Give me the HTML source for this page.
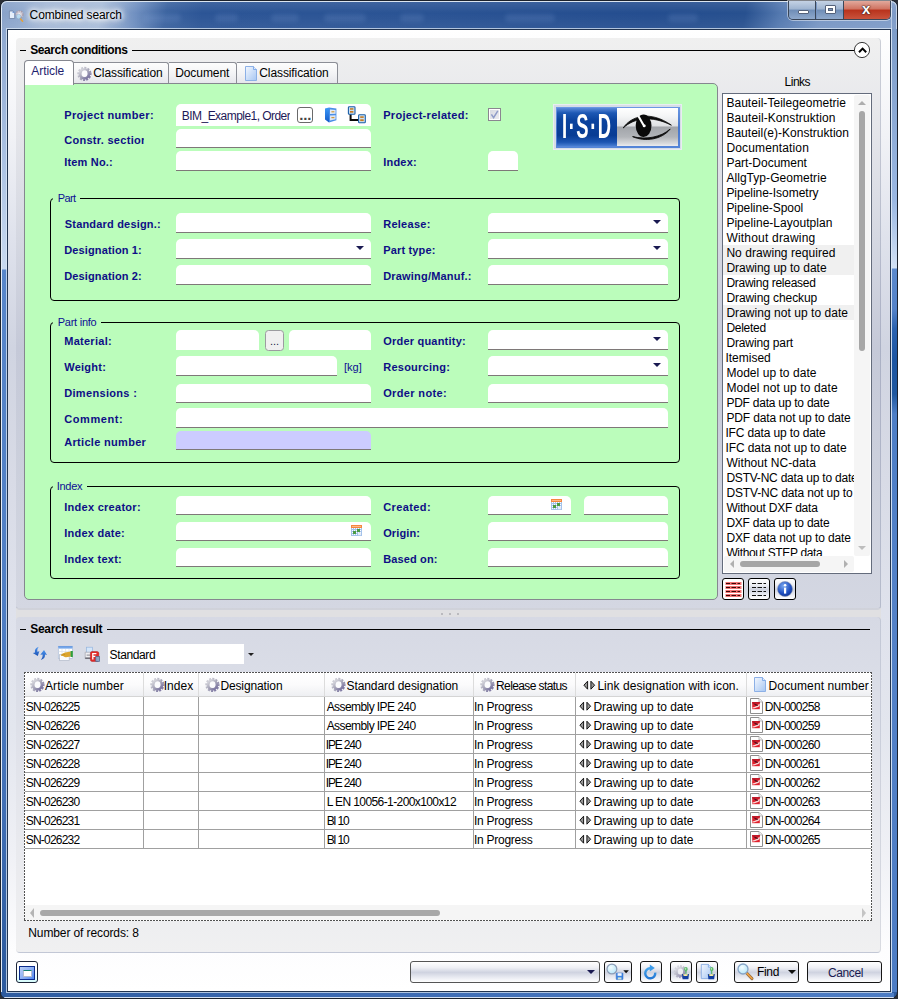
<!DOCTYPE html><html><head><meta charset="utf-8"><title>Combined search</title><style>
*{box-sizing:border-box;margin:0;padding:0}
html,body{width:898px;height:999px;overflow:hidden}
body{position:relative;font-family:"Liberation Sans",sans-serif;font-size:12px;color:#000;background:#2a2e36}
.a{position:absolute}
.t{position:absolute;white-space:nowrap;line-height:14px;height:14px}
.lb{position:absolute;white-space:nowrap;font-weight:700;font-size:11px;line-height:13px;height:13px;color:#0e0e86}
.gt{position:absolute;white-space:nowrap;font-size:11px;line-height:13px;height:13px;color:#0e0e94}
.f{position:absolute;background:#fff;border-radius:5px 5px 0 0;border-bottom:1px solid #7e7878}
.f.nb{border-bottom:0}
.grp{position:absolute;border:1px solid #000;border-radius:4px}
.cut{position:absolute;background:#bbfdbb;height:3px}
.dd{position:absolute;width:0;height:0;border-left:4px solid transparent;border-right:4px solid transparent;border-top:4px solid #1a1a52}
.btn{position:absolute;border:1px solid #161616;border-radius:3px;background:linear-gradient(#ffffff 0%,#eff0f5 28%,#cfd3e0 52%,#e6e8f0 74%,#ffffff 100%)}
.row{position:absolute;left:25px;width:846px;height:1px;background:#a0a0a0}
.col{position:absolute;width:1px;background:#a0a0a0;top:696px;height:152px}
.hc{position:absolute;width:1px;top:673px;height:23px;background:#dcdcdc}
.li{position:absolute;left:726px;white-space:nowrap;line-height:15px;height:15px;color:#000}
</style></head><body>
<div class="a" id="frame" style="left:0;top:0;width:898px;height:999px;border-radius:7px 7px 7px 6px;background:linear-gradient(180deg,#8ea7cd 0px,#8ea8d0 30px,#a9c0e2 150px,#c8d9f0 268px,#5886ca 269px,#4f7ec4 600px,#4270b6 800px,#2e5ca0 960px,#2c5a9e 999px);border:1px solid #1c222c"></div>
<div class="a" id="title" style="left:1px;top:1px;width:896px;height:28px;border-radius:6px 6px 0 0;background:linear-gradient(180deg,rgba(255,255,255,.10) 0,rgba(255,255,255,0) 12px,rgba(255,255,255,.06) 28px),linear-gradient(100deg,#87a0c8 0px,#8fa8cd 20px,#a4b8d6 45px,#a9bdd9 100px,#6f8fc0 135px,#3a629f 165px,#2c5596 200px,#2a5394 420px,#244d8f 640px,#27508f 735px,#5479b0 770px,#7896c4 810px,#7f9cc8 896px);box-shadow:inset 0 1px 0 #dbe5f0, inset 1px 0 0 #d5e0ee, inset -1px 0 0 #c5d3e6"></div>
<div class="a" style="left:143px;top:14px;width:38px;height:8px;border-radius:4px;background:rgba(140,175,225,.16);filter:blur(2px)"></div>
<div class="a" style="left:215px;top:14px;width:23px;height:8px;border-radius:4px;background:rgba(140,175,225,.16);filter:blur(2px)"></div>
<div class="a" style="left:271px;top:14px;width:28px;height:8px;border-radius:4px;background:rgba(140,175,225,.16);filter:blur(2px)"></div>
<div class="a" style="left:324px;top:14px;width:42px;height:8px;border-radius:4px;background:rgba(140,175,225,.16);filter:blur(2px)"></div>
<div class="a" style="left:400px;top:14px;width:24px;height:8px;border-radius:4px;background:rgba(140,175,225,.16);filter:blur(2px)"></div>
<div class="a" style="left:505px;top:14px;width:50px;height:8px;border-radius:4px;background:rgba(140,175,225,.16);filter:blur(2px)"></div>
<div class="a" style="left:668px;top:14px;width:30px;height:8px;border-radius:4px;background:rgba(140,175,225,.16);filter:blur(2px)"></div>
<div class="a" style="left:891px;top:29px;width:6px;height:963px;background:linear-gradient(180deg,#7d9cc8 0,#9ab7e2 170px,#d2e1f4 239px,#5b89cc 240px,#5482c8 280px,#2a62b0 300px,#1c55a2 330px,#20589f 365px,#4d7ec6 385px,#5482c8 600px,#4c7cc4 963px)"></div>
<div class="a" style="left:891px;top:8px;width:1px;height:984px;background:rgba(230,240,252,.55)"></div>
<div class="a" style="left:1px;top:8px;width:1px;height:984px;background:#e4ecf6"></div>
<div class="a" style="left:6px;top:993px;width:888px;height:4px;background:linear-gradient(90deg,#2e5ca0 0,#3a68b0 300px,#4878c0 700px,#4c7cc4 100%)"></div>
<div class="a" style="left:4px;top:997px;width:890px;height:1px;background:#d4e0f2;border-radius:0 0 3px 3px"></div>
<div class="a" id="client" style="left:8px;top:30px;width:882px;height:961px;background:linear-gradient(180deg,#ffffff 0px,#f1f2f6 105px,#dfe2ec 208px,#d0d4e1 318px,#d8dbe6 450px,#dfe2ec 580px,#e3e6ee 700px,#eff0f5 820px,#fdfdfe 920px,#ffffff 961px);box-shadow:0 0 0 1px #22344f,0 0 0 2px rgba(220,232,246,.75)"></div>
<svg class="a" style="left:8px;top:9px" width="17" height="15" viewBox="8 9 17 15"><path d="M9.4 11 H13 L14.7 12.6 V18.5 H9.4Z" fill="#e6effb" stroke="#6c80a4" stroke-width=".8"/><path d="M12.6 11.2 L14.5 13 H12.6Z" fill="#5f8fd8"/><circle cx="19.4" cy="14.4" r="3.6" fill="#d2ccd6" stroke="#a49cac" stroke-width="1.4" stroke-dasharray="1.6 1"/><circle cx="19.2" cy="14.6" r="1.5" fill="#f0f0f4"/><circle cx="18.6" cy="16.6" r="2.3" fill="#b4dcf4" fill-opacity=".9" stroke="#90a8c0" stroke-width=".5"/><path d="M20.6 19 L22.6 21.2" stroke="#e8a030" stroke-width="1.4" stroke-linecap="round"/></svg>
<div class="t" style="left:29.60px;top:8px;letter-spacing:-0.120px;color:#000;text-shadow:0 0 7px #fff,0 0 7px #fff,0 0 4px #fff,0 0 10px #fff">Combined search</div>
<div class="a" style="left:788px;top:1px;width:103px;height:19px;border:1px solid #3a4658;border-top:0;border-radius:0 0 5px 5px;overflow:hidden;box-shadow:0 0 0 1px rgba(255,255,255,.45)"><div class="a" style="left:0;top:0;width:27px;height:18px;background:linear-gradient(#c4d2e4 0,#9fb4d0 45%,#6f8db6 50%,#8fa9cc 100%);border-right:1px solid #3a4658"></div><div class="a" style="left:28px;top:0;width:27px;height:18px;background:linear-gradient(#c4d2e4 0,#9fb4d0 45%,#6f8db6 50%,#8fa9cc 100%);border-right:1px solid #3a4658"></div><div class="a" style="left:55px;top:0;width:46px;height:18px;background:linear-gradient(#e2a99c 0,#cf7260 45%,#b8321c 50%,#c9533c 100%)"></div><div class="a" style="left:9px;top:9px;width:11px;height:4px;background:#fff;border:1px solid #55627a;border-radius:1px"></div><div class="a" style="left:36px;top:4px;width:11px;height:9px;background:#fff;border:1px solid #55627a;border-radius:1px"></div><div class="a" style="left:39px;top:7px;width:5px;height:3px;background:#7f96b8;border:1px solid #55627a"></div><div class="t" style="left:73px;top:1px;font-weight:700;font-size:15px;line-height:14px;color:#fff;text-shadow:0 0 1px #3a2020,0 0 1px #3a2020,0 0 2px #3a2020">x</div></div>
<div class="a" style="left:16px;top:600px;width:865px;height:24px;background:#e0e0e2"></div>
<div class="a" id="p1" style="left:16px;top:38px;width:865px;height:572px;border-radius:4px;background:linear-gradient(180deg,#f0f0f0 0px,#e4e5ea 97px,#d5d8e2 200px,#c5c9d8 310px,#cdd1dd 450px,#d4d7e2 572px);border-right:1px solid rgba(80,90,130,.22);border-bottom:2px solid rgba(80,90,130,.2)"></div>
<div class="a" style="left:20px;top:50px;width:6px;height:1px;background:#000"></div>
<div class="t" style="left:30.20px;top:43px;letter-spacing:-0.397px;font-weight:700;">Search conditions</div>
<div class="a" style="left:132px;top:50px;width:722px;height:1px;background:#000"></div>
<svg class="a" style="left:853px;top:41px" width="18" height="18" viewBox="0 0 18 18"><circle cx="9" cy="9" r="7.6" fill="#fff" stroke="#222" stroke-width="0.9"/><path d="M6.0 11.2 L9.6 7.6 L13.2 11.2" fill="none" stroke="#000" stroke-width="2"/></svg>
<div class="a" style="left:73px;top:62px;width:96px;height:21px;background:linear-gradient(#fdfdfd 0,#f4f4f6 50%,#e6e7ec 100%);border:1px solid #8c8e96;border-left:0;border-bottom:0;border-radius:0 3px 0 0"></div>
<div class="a" style="left:169px;top:62px;width:68px;height:21px;background:linear-gradient(#fdfdfd 0,#f4f4f6 50%,#e6e7ec 100%);border:1px solid #8c8e96;border-left:0;border-bottom:0;border-radius:0 3px 0 0"></div>
<div class="a" style="left:237px;top:62px;width:101px;height:21px;background:linear-gradient(#fdfdfd 0,#f4f4f6 50%,#e6e7ec 100%);border:1px solid #8c8e96;border-left:0;border-bottom:0;border-radius:0 3px 0 0"></div>
<div class="a" id="green" style="left:24px;top:83px;width:694px;height:517px;background:#bbfdbb;border:1px solid #85878f;border-radius:0 5px 5px 5px"></div>
<div class="a" style="left:24px;top:60px;width:50px;height:25px;background:#fff;border:1px solid #85878f;border-bottom:0;border-radius:4px 4px 0 0"></div>
<div class="t" style="left:31.30px;top:64px;letter-spacing:-0.078px;color:#1e1e6e">Article</div>
<svg class="a" style="left:77px;top:66px" width="15" height="16" viewBox="0 0 15 16"><defs><linearGradient id="gg" x1="0.15" y1="0.1" x2="0.85" y2="0.95"><stop offset="0" stop-color="#d0d0d8"/><stop offset="0.45" stop-color="#aaa9bb"/><stop offset="1" stop-color="#7d77a2"/></linearGradient></defs><g transform="translate(7.4 7.9)"><circle r="6.2" fill="none" stroke="url(#gg)" stroke-width="1.9" stroke-dasharray="2.0 1.246" transform="rotate(-8)"/><circle r="4.35" fill="none" stroke="url(#gg)" stroke-width="2.9"/><ellipse cx="0.3" cy="-0.3" rx="2.7" ry="3.3" fill="#fbfbfd"/></g></svg>
<div class="t" style="left:93.30px;top:66px;letter-spacing:-0.102px;">Classification</div>
<div class="t" style="left:175.20px;top:66px;letter-spacing:-0.080px;">Document</div>
<svg class="a" style="left:245px;top:66px" width="12" height="15" viewBox="0 0 12 15"><defs><linearGradient id="dg0" x1="0" y1="0" x2="1" y2="1"><stop offset="0" stop-color="#f4f8ff"/><stop offset="1" stop-color="#a6c6f2"/></linearGradient></defs><path d="M0.5 0.5 H8.5 L11.5 3.5 V14.5 H0.5Z" fill="url(#dg0)" stroke="#8cb0e6" stroke-width="1"/><path d="M8.5 0.5 V3.5 H11.5" fill="#dfeafc" stroke="#6f9ee4" stroke-width="0.8"/></svg>
<div class="t" style="left:259.30px;top:66px;letter-spacing:-0.102px;">Classification</div>
<div class="lb" style="left:64.20px;top:109px;letter-spacing:0.358px;">Project number:</div>
<div class="f nb" style="left:176px;top:104px;width:195px;height:22px;"></div>
<div class="t" style="left:181.80px;top:109px;letter-spacing:-0.544px;color:#1e1a58;width:107.9px;overflow:hidden">BIM_Example1, Order</div>
<div class="a" style="left:297px;top:107px;width:16px;height:16px;border:1px solid #6a6a6a;border-radius:3px;background:#fff"></div>
<div class="t" style="left:299.2px;top:108px;font-size:15px;font-weight:700;letter-spacing:-0.17px;color:#444">...</div>
<svg class="a" style="left:324px;top:106px" width="14" height="18" viewBox="324 106 14 18"><defs><linearGradient id="cb1" x1="0" y1="0" x2="0" y2="1"><stop offset="0" stop-color="#3c9af8"/><stop offset="1" stop-color="#1258c8"/></linearGradient></defs><path d="M325 108.6 L329 107.4 V122.6 L325 119.6Z" fill="url(#cb1)"/><path d="M329 107.4 L336.4 108.4 V120.2 L329 122.6Z" fill="#4a8ee6"/><path d="M330 109.4 L335.6 110 V113.8 L330 114Z" fill="#e2ebf8"/><path d="M330 115.4 L335.6 115.2 V119.2 L330 120.4Z" fill="#dce6f6"/><rect x="331.4" y="111.2" width="3" height="1.2" fill="#d09a3a"/><rect x="331.4" y="117" width="3" height="1.2" fill="#d09a3a"/></svg>
<svg class="a" style="left:347px;top:105px" width="20" height="19" viewBox="347 105 20 19"><path d="M350.6 114 V120 H358.5" fill="none" stroke="#0a0a0a" stroke-width="2"/><rect x="348.4" y="106.7" width="6.6" height="7.6" rx=".8" fill="#cfe0f0" stroke="#1a5fa8" stroke-width="1.1"/><rect x="350" y="108.2" width="3.4" height="1.5" fill="#c47a22"/><rect x="350" y="111" width="3.4" height="1.7" fill="#c47a22"/><rect x="358.6" y="114.7" width="6.7" height="8" rx=".8" fill="#cfe0f0" stroke="#1a5fa8" stroke-width="1.1"/><rect x="360.2" y="116.3" width="3.5" height="1.6" fill="#c47a22"/><rect x="360.2" y="119.3" width="3.5" height="1.8" fill="#c47a22"/></svg>
<div class="lb" style="left:383.20px;top:109px;letter-spacing:0.305px;">Project-related:</div>
<div class="a" style="left:488px;top:108px;width:13px;height:13px;border:1px solid #8a8690;background:#fff"><div class="a" style="left:1px;top:1px;width:9px;height:9px;background:linear-gradient(135deg,#d8dbe2,#ececf0)"></div><svg class="a" style="left:0px;top:0px" width="11" height="11" viewBox="0 0 11 11"><path d="M2.4 5.4 L4.6 8.6 L8.8 1.8" fill="none" stroke="#8f9cc8" stroke-width="1.5"/></svg></div>
<div class="lb" style="left:64.20px;top:134px;letter-spacing:0.291px;width:80.3px;overflow:hidden">Constr. section</div>
<div class="f " style="left:176px;top:129px;width:195px;height:19px;"></div>
<div class="lb" style="left:64.20px;top:156px;letter-spacing:0.188px;">Item No.:</div>
<div class="f " style="left:176px;top:151px;width:195px;height:20px;"></div>
<div class="lb" style="left:383.20px;top:156px;letter-spacing:0.214px;">Index:</div>
<div class="f " style="left:488px;top:151px;width:30px;height:20px;"></div>
<div class="a" style="left:553px;top:104px;width:129px;height:46px;background:#d6dde6;border:1px solid #e8edf2"></div>
<div class="a" style="left:555.5px;top:106.5px;width:124px;height:41px;background:linear-gradient(#6a98e4,#4676cc 50%,#5585d8)"></div>
<div class="a" style="left:557px;top:108px;width:60px;height:38px;background:linear-gradient(#5a8ada 0,#1d58b4 13%,#0b439e 32%,#083c94 72%,#1c55b2 90%,#477cd0 100%)"></div>
<div class="a" style="left:617px;top:108px;width:61px;height:38px;background:linear-gradient(#ffffff 0,#f4f5f6 22%,#dfe1e4 46%,#a2a5aa 51%,#b2b5b9 76%,#d8d9dc 93%,#ececee 100%)"></div>
<div class="t" style="left:561.95px;top:106.2px;height:40px;line-height:40px;font-size:35px;font-weight:700;color:#fff;transform:scaleX(0.5245);transform-origin:0 0;letter-spacing:3px">I·S·D</div>
<svg class="a" style="left:618px;top:108px" width="60" height="38" viewBox="618 108 60 38"><path d="M623.2 128 C631 116,650 110,671.4 125.2 C652 115.4,634 117.8,623.2 128Z" fill="#0c0c0c" stroke="#0c0c0c" stroke-width=".8"/><path d="M632.6 136.6 C645 142.2,662 139.6,670.2 129 C661 137.2,646 140,632.6 136.6Z" fill="#0c0c0c" stroke="#0c0c0c" stroke-width=".9"/><ellipse cx="643.6" cy="125.8" rx="7.9" ry="11.2" fill="#0a0a0a"/><path d="M638.8 116.8 L643.2 124.6" stroke="#fff" stroke-width="2.1" stroke-linecap="round"/><circle cx="644.2" cy="125.8" r="1.5" fill="#fff"/></svg>
<div class="grp" style="left:50px;top:198px;width:630px;height:103px"></div>
<div class="cut" style="left:53px;top:197px;width:27px"></div>
<div class="gt" style="left:57.70px;top:192px;letter-spacing:-0.573px;">Part</div>
<div class="grp" style="left:50px;top:322px;width:630px;height:141px"></div>
<div class="cut" style="left:53px;top:321px;width:48px"></div>
<div class="gt" style="left:57.70px;top:316px;letter-spacing:-0.243px;">Part info</div>
<div class="grp" style="left:50px;top:486px;width:630px;height:93px"></div>
<div class="cut" style="left:53px;top:485px;width:34px"></div>
<div class="gt" style="left:56.70px;top:480px;letter-spacing:-0.277px;">Index</div>
<div class="lb" style="left:64.80px;top:218px;letter-spacing:0.185px;">Standard design.:</div>
<div class="f " style="left:176px;top:213px;width:195px;height:20px;"></div>
<div class="lb" style="left:64.20px;top:244px;letter-spacing:0.137px;">Designation 1:</div>
<div class="f " style="left:176px;top:239px;width:195px;height:20px;"></div>
<div class="dd" style="left:356px;top:246px"></div>
<div class="lb" style="left:64.20px;top:270px;letter-spacing:0.137px;">Designation 2:</div>
<div class="f " style="left:176px;top:265px;width:195px;height:20px;"></div>
<div class="lb" style="left:383.20px;top:218px;letter-spacing:0.273px;">Release:</div>
<div class="f " style="left:488px;top:213px;width:180px;height:20px;"></div>
<div class="dd" style="left:653px;top:220px"></div>
<div class="lb" style="left:383.20px;top:244px;letter-spacing:0.159px;">Part type:</div>
<div class="f " style="left:488px;top:239px;width:180px;height:20px;"></div>
<div class="dd" style="left:653px;top:246px"></div>
<div class="lb" style="left:383.20px;top:270px;letter-spacing:0.194px;">Drawing/Manuf.:</div>
<div class="f " style="left:488px;top:265px;width:180px;height:20px;"></div>
<div class="lb" style="left:64.20px;top:335px;letter-spacing:0.278px;">Material:</div>
<div class="f nb" style="left:176px;top:330px;width:83px;height:20px;"></div>
<div class="f nb" style="left:289px;top:330px;width:82px;height:20px;"></div>
<div class="a" style="left:265px;top:330px;width:19px;height:21px;border:1px solid #9c9ca0;border-radius:3.5px;background:#f0f0f0"></div>
<div class="t" style="left:270px;top:334px;font-size:11px;color:#1a1a4a">...</div>
<div class="lb" style="left:64.20px;top:361px;letter-spacing:0.257px;">Weight:</div>
<div class="f " style="left:176px;top:356px;width:161px;height:20px;"></div>
<div class="gt" style="left:344px;top:361px">[kg]</div>
<div class="lb" style="left:64.20px;top:387px;letter-spacing:0.327px;">Dimensions :</div>
<div class="f " style="left:176px;top:384px;width:195px;height:19px;"></div>
<div class="lb" style="left:64.20px;top:413px;letter-spacing:0.596px;">Comment:</div>
<div class="f " style="left:176px;top:408px;width:492px;height:20px;"></div>
<div class="lb" style="left:64.20px;top:436px;letter-spacing:0.312px;width:83.2px;overflow:hidden">Article number:</div>
<div class="f " style="left:176px;top:431px;width:195px;height:19px;background:#ccccff"></div>
<div class="lb" style="left:383.20px;top:335px;letter-spacing:0.215px;">Order quantity:</div>
<div class="f " style="left:488px;top:330px;width:180px;height:20px;"></div>
<div class="dd" style="left:653px;top:337px"></div>
<div class="lb" style="left:383.20px;top:361px;letter-spacing:0.254px;">Resourcing:</div>
<div class="f " style="left:488px;top:356px;width:180px;height:20px;"></div>
<div class="dd" style="left:653px;top:363px"></div>
<div class="lb" style="left:383.20px;top:387px;letter-spacing:0.357px;">Order note:</div>
<div class="f " style="left:488px;top:384px;width:180px;height:19px;"></div>
<div class="lb" style="left:64.20px;top:501px;letter-spacing:0.278px;">Index creator:</div>
<div class="f " style="left:176px;top:496px;width:195px;height:19px;"></div>
<div class="lb" style="left:64.20px;top:527px;letter-spacing:0.250px;">Index date:</div>
<div class="f " style="left:176px;top:522px;width:195px;height:19px;"></div>
<div class="lb" style="left:64.20px;top:553px;letter-spacing:0.255px;">Index text:</div>
<div class="f " style="left:176px;top:548px;width:195px;height:19px;"></div>
<div class="lb" style="left:383.20px;top:501px;letter-spacing:0.406px;">Created:</div>
<div class="f " style="left:488px;top:496px;width:83px;height:19px;"></div>
<div class="f " style="left:584px;top:496px;width:84px;height:19px;"></div>
<div class="lb" style="left:383.20px;top:527px;letter-spacing:0.110px;">Origin:</div>
<div class="f " style="left:488px;top:522px;width:180px;height:19px;"></div>
<div class="lb" style="left:383.20px;top:553px;letter-spacing:0.130px;">Based on:</div>
<div class="f " style="left:488px;top:548px;width:180px;height:19px;"></div>
<svg class="a" style="left:351px;top:525px" width="11" height="11" viewBox="0 0 11 11"><rect x="0" y="0" width="11" height="11" fill="#a4c2ea"/><rect x="0" y="0" width="11" height="3" fill="#f5873e"/><rect x="1" y="1" width="9" height="1" fill="#fbb88a"/><rect x="1" y="3" width="1" height="1" fill="#fff"/><rect x="1" y="5" width="1" height="1" fill="#fff"/><rect x="1" y="7" width="1" height="1" fill="#fff"/><rect x="1" y="9" width="1" height="1" fill="#fff"/><rect x="3" y="3" width="1" height="1" fill="#fff"/><rect x="3" y="5" width="1" height="1" fill="#fff"/><rect x="3" y="7" width="1" height="1" fill="#fff"/><rect x="3" y="9" width="1" height="1" fill="#fff"/><rect x="5" y="3" width="1" height="1" fill="#fff"/><rect x="5" y="5" width="1" height="1" fill="#fff"/><rect x="5" y="7" width="1" height="1" fill="#fff"/><rect x="5" y="9" width="1" height="1" fill="#fff"/><rect x="7" y="3" width="1" height="1" fill="#fff"/><rect x="7" y="5" width="1" height="1" fill="#fff"/><rect x="7" y="7" width="1" height="1" fill="#fff"/><rect x="7" y="9" width="1" height="1" fill="#fff"/><rect x="9" y="3" width="1" height="1" fill="#fff"/><rect x="9" y="5" width="1" height="1" fill="#fff"/><rect x="9" y="7" width="1" height="1" fill="#fff"/><rect x="9" y="9" width="1" height="1" fill="#fff"/><rect x="6" y="4" width="3" height="3" fill="#4c9c44"/><rect x="2" y="6" width="3" height="3" fill="#4c9c44"/><rect x="7" y="7.6" width="3" height="2.6" fill="#e4ecf8"/></svg>
<svg class="a" style="left:551px;top:499px" width="11" height="11" viewBox="0 0 11 11"><rect x="0" y="0" width="11" height="11" fill="#a4c2ea"/><rect x="0" y="0" width="11" height="3" fill="#f5873e"/><rect x="1" y="1" width="9" height="1" fill="#fbb88a"/><rect x="1" y="3" width="1" height="1" fill="#fff"/><rect x="1" y="5" width="1" height="1" fill="#fff"/><rect x="1" y="7" width="1" height="1" fill="#fff"/><rect x="1" y="9" width="1" height="1" fill="#fff"/><rect x="3" y="3" width="1" height="1" fill="#fff"/><rect x="3" y="5" width="1" height="1" fill="#fff"/><rect x="3" y="7" width="1" height="1" fill="#fff"/><rect x="3" y="9" width="1" height="1" fill="#fff"/><rect x="5" y="3" width="1" height="1" fill="#fff"/><rect x="5" y="5" width="1" height="1" fill="#fff"/><rect x="5" y="7" width="1" height="1" fill="#fff"/><rect x="5" y="9" width="1" height="1" fill="#fff"/><rect x="7" y="3" width="1" height="1" fill="#fff"/><rect x="7" y="5" width="1" height="1" fill="#fff"/><rect x="7" y="7" width="1" height="1" fill="#fff"/><rect x="7" y="9" width="1" height="1" fill="#fff"/><rect x="9" y="3" width="1" height="1" fill="#fff"/><rect x="9" y="5" width="1" height="1" fill="#fff"/><rect x="9" y="7" width="1" height="1" fill="#fff"/><rect x="9" y="9" width="1" height="1" fill="#fff"/><rect x="6" y="4" width="3" height="3" fill="#4c9c44"/><rect x="2" y="6" width="3" height="3" fill="#4c9c44"/><rect x="7" y="7.6" width="3" height="2.6" fill="#e4ecf8"/></svg>
<div class="t" style="left:784.60px;top:75px;letter-spacing:-0.503px;">Links</div>
<div class="a" id="links" style="left:722px;top:93px;width:150px;height:481px;background:#fff;border:1px solid #646c7c"></div>
<div class="a" style="left:723px;top:94px;width:130.6px;height:461.6px;overflow:hidden">
<div class="li" style="left:3.40px;top:2px;letter-spacing:0.040px;">Bauteil-Teilegeometrie</div>
<div class="li" style="left:3.40px;top:17px;letter-spacing:0.083px;">Bauteil-Konstruktion</div>
<div class="li" style="left:3.40px;top:32px;letter-spacing:0.024px;">Bauteil(e)-Konstruktion</div>
<div class="li" style="left:3.40px;top:47px;letter-spacing:0.147px;">Documentation</div>
<div class="li" style="left:3.40px;top:62px;letter-spacing:-0.013px;">Part-Document</div>
<div class="li" style="left:3.40px;top:77px;letter-spacing:0.050px;">AllgTyp-Geometrie</div>
<div class="li" style="left:3.40px;top:92px;letter-spacing:-0.031px;">Pipeline-Isometry</div>
<div class="li" style="left:3.40px;top:107px;letter-spacing:-0.040px;">Pipeline-Spool</div>
<div class="li" style="left:3.40px;top:122px;letter-spacing:0.031px;">Pipeline-Layoutplan</div>
<div class="li" style="left:3.40px;top:137px;letter-spacing:0.202px;">Without drawing</div>
<div class="a" style="left:0;top:151px;width:134px;height:15px;background:#f0f0f0"></div>
<div class="li" style="left:3.40px;top:152px;letter-spacing:0.051px;">No drawing required</div>
<div class="a" style="left:0;top:166px;width:134px;height:15px;background:#f0f0f0"></div>
<div class="li" style="left:3.40px;top:167px;letter-spacing:-0.033px;">Drawing up to date</div>
<div class="li" style="left:3.40px;top:182px;letter-spacing:-0.260px;">Drawing released</div>
<div class="li" style="left:3.40px;top:197px;letter-spacing:-0.084px;">Drawing checkup</div>
<div class="a" style="left:0;top:211px;width:134px;height:15px;background:#f0f0f0"></div>
<div class="li" style="left:3.40px;top:212px;letter-spacing:0.040px;">Drawing not up to date</div>
<div class="li" style="left:3.40px;top:227px;letter-spacing:-0.265px;">Deleted</div>
<div class="li" style="left:3.40px;top:242px;letter-spacing:-0.118px;">Drawing part</div>
<div class="li" style="left:2.40px;top:257px;letter-spacing:0.003px;">Itemised</div>
<div class="li" style="left:3.40px;top:272px;letter-spacing:0.045px;">Model up to date</div>
<div class="li" style="left:3.40px;top:287px;letter-spacing:0.093px;">Model not up to date</div>
<div class="li" style="left:3.40px;top:302px;letter-spacing:-0.235px;">PDF data up to date</div>
<div class="li" style="left:3.40px;top:317px;letter-spacing:-0.147px;">PDF data not up to date</div>
<div class="li" style="left:2.40px;top:332px;letter-spacing:-0.142px;">IFC data up to date</div>
<div class="li" style="left:2.40px;top:347px;letter-spacing:-0.072px;">IFC data not up to date</div>
<div class="li" style="left:3.40px;top:362px;letter-spacing:0.055px;">Without NC-data</div>
<div class="li" style="left:3.40px;top:377px;letter-spacing:-0.217px;">DSTV-NC data up to date</div>
<div class="li" style="left:3.40px;top:392px;letter-spacing:-0.149px;">DSTV-NC data not up to date</div>
<div class="li" style="left:3.40px;top:407px;letter-spacing:-0.215px;">Without DXF data</div>
<div class="li" style="left:3.40px;top:422px;letter-spacing:-0.235px;">DXF data up to date</div>
<div class="li" style="left:3.40px;top:437px;letter-spacing:-0.129px;">DXF data not up to date</div>
<div class="li" style="left:3.40px;top:452px;letter-spacing:-0.342px;">Without STEP data</div>
</div>
<div class="a" style="left:854px;top:95px;width:16px;height:461px;background:#f5f5f5;border-radius:2px"></div>
<div class="a" style="left:859px;top:111px;width:6px;height:240px;border-radius:3px;background:#a6a6a6"></div>
<div class="a" style="left:858px;top:101px;width:0;height:0;border-left:4px solid transparent;border-right:4px solid transparent;border-bottom:4px solid #adadad"></div>
<div class="a" style="left:858px;top:546px;width:0;height:0;border-left:4px solid transparent;border-right:4px solid transparent;border-top:4px solid #bdbdbd"></div>
<div class="a" style="left:724px;top:556px;width:130px;height:16px;background:#f5f5f5;border-radius:2px"></div>
<div class="a" style="left:740px;top:561px;width:80px;height:6px;border-radius:3px;background:#a6a6a6"></div>
<div class="a" style="left:730px;top:560px;width:0;height:0;border-top:4px solid transparent;border-bottom:4px solid transparent;border-right:4px solid #b0b0b0"></div>
<div class="a" style="left:844px;top:560px;width:0;height:0;border-top:4px solid transparent;border-bottom:4px solid transparent;border-left:4px solid #b0b0b0"></div>
<div class="btn" style="left:722px;top:578px;width:22px;height:22px;border-color:#000;background:#fff"><svg class="a" style="left:2px;top:3px" width="17" height="15" viewBox="0 0 17 15"><rect x="0.5" y="0" width="16" height="3" fill="#f47474"/><rect x="0.5" y="4" width="16" height="3" fill="#f47474"/><rect x="0.5" y="8" width="16" height="3" fill="#f47474"/><rect x="0.5" y="12" width="16" height="3" fill="#f47474"/><path d="M1 1.5H5M6.5 1.5H11M12.5 1.5H15" stroke="#3a0808" stroke-width="1.1"/><path d="M1 5.5H5M6.5 5.5H11M12.5 5.5H15" stroke="#3a0808" stroke-width="1.1"/><path d="M1 9.5H5M6.5 9.5H11M12.5 9.5H15" stroke="#3a0808" stroke-width="1.1"/><path d="M1 13.5H5M6.5 13.5H11M12.5 13.5H15" stroke="#3a0808" stroke-width="1.1"/></svg></div>
<div class="btn" style="left:748px;top:578px;width:22px;height:22px;border-color:#000"><svg class="a" style="left:2px;top:3px" width="17" height="15" viewBox="0 0 17 15"><path d="M1 1.5H5M6.5 1.5H11M12.5 1.5H15" stroke="#111" stroke-width="1.1"/><path d="M1 5.5H5M6.5 5.5H11M12.5 5.5H15" stroke="#111" stroke-width="1.1"/><path d="M1 9.5H5M6.5 9.5H11M12.5 9.5H15" stroke="#111" stroke-width="1.1"/><path d="M1 13.5H5M6.5 13.5H11M12.5 13.5H15" stroke="#111" stroke-width="1.1"/></svg></div>
<div class="btn" style="left:774px;top:578px;width:22px;height:22px;border-color:#000"><svg class="a" style="left:2px;top:2px" width="16" height="16" viewBox="0 0 16 16"><defs><radialGradient id="ig" cx=".4" cy=".3" r=".8"><stop offset="0" stop-color="#7aa8f0"/><stop offset=".6" stop-color="#1f4fc0"/><stop offset="1" stop-color="#0c2f8c"/></radialGradient></defs><circle cx="8" cy="8" r="7.5" fill="url(#ig)" stroke="#8a96b0" stroke-width=".6"/><rect x="7" y="6.6" width="2.2" height="6" fill="#fff"/><circle cx="8.1" cy="4.3" r="1.3" fill="#fff"/></svg></div>
<div class="a" style="left:440.5px;top:612.5px;width:2px;height:2px;background:#aeaeb2;border-radius:1px"></div>
<div class="a" style="left:448.5px;top:612.5px;width:2px;height:2px;background:#aeaeb2;border-radius:1px"></div>
<div class="a" style="left:456.5px;top:612.5px;width:2px;height:2px;background:#aeaeb2;border-radius:1px"></div>
<div class="a" id="p2" style="left:16px;top:617px;width:865px;height:336px;border-radius:4px;background:linear-gradient(180deg,#d6d9e4 0px,#dadde7 60px,#e8e9ee 220px,#f0f0f1 336px);border-right:1px solid rgba(80,90,130,.14);border-bottom:1px solid rgba(80,90,130,.14)"></div>
<div class="a" style="left:20px;top:629px;width:6px;height:1px;background:#000"></div>
<div class="t" style="left:30.30px;top:622px;letter-spacing:-0.328px;font-weight:700;">Search result</div>
<div class="a" style="left:107px;top:629px;width:763px;height:1px;background:#000"></div>
<svg class="a" style="left:32px;top:646px" width="16" height="16" viewBox="32 646 16 16"><defs><linearGradient id="ar" x1="0" y1="0" x2="0" y2="1"><stop offset="0" stop-color="#4a94ee"/><stop offset="1" stop-color="#1c52b4"/></linearGradient></defs><path d="M38.8 646.8 C37.2 648.6,37 650.4,37.6 651.9 L39.4 651.1 L37.8 656 L32.8 652.9 L35 652.5 C34.4 650,35.6 647.8,38.8 646.8Z" fill="url(#ar)"/><path d="M44 650 L47 654.9 L45 654.6 C45.3 657.2,44 659.2,40.8 660 C42.4 658.2,42.8 656.4,42.6 654.6 L40.3 654.8Z" fill="url(#ar)"/></svg>
<svg class="a" style="left:57px;top:645px" width="17" height="17" viewBox="57 645 17 17"><defs><linearGradient id="th" x1="0" y1="0" x2="0" y2="1"><stop offset="0" stop-color="#3f82e0"/><stop offset="1" stop-color="#b4d0f4"/></linearGradient></defs><rect x="58.3" y="646.3" width="14.2" height="12" fill="#fff" stroke="#a9bcd8" stroke-width=".7"/><rect x="58.3" y="646.3" width="14.2" height="2.6" fill="url(#th)"/><path d="M58.5 651.5H72.5M58.5 654.5H72.5M62 649V658M65.6 649V658M69 649V658" stroke="#d4dce8" stroke-width=".6"/><rect x="59.6" y="654.8" width="9.6" height="5.8" fill="#fbfbfd" stroke="#b0b8c8" stroke-width=".7"/><path d="M60.8 655.2 C62 653.6,63.4 653,65 652.4 L70.8 651.6 V656.6 L66 657.2 C64.6 657.4,63.8 656.4,62.8 656 Z" fill="#dba42e"/><path d="M61 655.3 L65 654.4" stroke="#b8841c" stroke-width=".6"/><rect x="70.6" y="651" width="2.2" height="6" fill="#2f9e3c"/></svg>
<svg class="a" style="left:84px;top:646px" width="17" height="17" viewBox="84 646 17 17"><rect x="86.4" y="647.2" width="6.2" height="5.6" fill="#d4e6fa" stroke="#94b4de" stroke-width=".7"/><path d="M85.2 652.2 H94.6 V658.6 H85.2Z" fill="#f0f0f3" stroke="#a4a4ae" stroke-width=".7"/><rect x="85.2" y="657.4" width="9.4" height="1.6" fill="#6e6e78"/><rect x="86.6" y="654.6" width="5" height="1" fill="#8a8a94"/><rect x="90.4" y="651.6" width="8.4" height="9.8" rx="1.6" fill="#e22a2a" stroke="#b01c1c" stroke-width=".5"/><path d="M92.8 659.4 V653.6 H96.4 M92.8 656.4 H95.6" stroke="#fff" stroke-width="1.3" fill="none"/><rect x="95.8" y="656.6" width="3.8" height="4.8" fill="#8ea4c4" stroke="#4e6890" stroke-width=".7"/></svg>
<div class="a" style="left:108px;top:644px;width:136px;height:20px;background:#fff"></div>
<div class="t" style="left:109.60px;top:648px;letter-spacing:-0.376px;">Standard</div>
<div class="a" style="left:247.7px;top:653px;width:0;height:0;border-left:3px solid transparent;border-right:3px solid transparent;border-top:3px solid #222"></div>
<div class="a" id="tbl" style="left:24px;top:672px;width:848px;height:249px;background:#fff"></div>
<div class="a" style="left:25px;top:673px;width:846px;height:23px;background:linear-gradient(#ffffff 0,#fbfbfc 50%,#eeeff2 100%)"></div>
<div class="col" style="left:143px"></div>
<div class="hc" style="left:143px"></div>
<div class="col" style="left:198px"></div>
<div class="hc" style="left:198px"></div>
<div class="col" style="left:324px"></div>
<div class="hc" style="left:324px"></div>
<div class="col" style="left:473px"></div>
<div class="hc" style="left:473px"></div>
<div class="col" style="left:575px"></div>
<div class="hc" style="left:575px"></div>
<div class="col" style="left:746px"></div>
<div class="hc" style="left:746px"></div>
<div class="row" style="top:696px;background:#d5d5d5"></div>
<div class="row" style="top:715px"></div>
<div class="row" style="top:734px"></div>
<div class="row" style="top:753px"></div>
<div class="row" style="top:772px"></div>
<div class="row" style="top:791px"></div>
<div class="row" style="top:810px"></div>
<div class="row" style="top:829px"></div>
<div class="row" style="top:848px"></div>
<svg class="a" style="left:29.6px;top:677px" width="15" height="16" viewBox="0 0 15 16"><defs><linearGradient id="gg" x1="0.15" y1="0.1" x2="0.85" y2="0.95"><stop offset="0" stop-color="#d0d0d8"/><stop offset="0.45" stop-color="#aaa9bb"/><stop offset="1" stop-color="#7d77a2"/></linearGradient></defs><g transform="translate(7.4 7.9)"><circle r="6.2" fill="none" stroke="url(#gg)" stroke-width="1.9" stroke-dasharray="2.0 1.246" transform="rotate(-8)"/><circle r="4.35" fill="none" stroke="url(#gg)" stroke-width="2.9"/><ellipse cx="0.3" cy="-0.3" rx="2.7" ry="3.3" fill="#fbfbfd"/></g></svg>
<div class="t" style="left:45.00px;top:679px;letter-spacing:0.107px;">Article number</div>
<svg class="a" style="left:149.6px;top:677px" width="15" height="16" viewBox="0 0 15 16"><defs><linearGradient id="gg" x1="0.15" y1="0.1" x2="0.85" y2="0.95"><stop offset="0" stop-color="#d0d0d8"/><stop offset="0.45" stop-color="#aaa9bb"/><stop offset="1" stop-color="#7d77a2"/></linearGradient></defs><g transform="translate(7.4 7.9)"><circle r="6.2" fill="none" stroke="url(#gg)" stroke-width="1.9" stroke-dasharray="2.0 1.246" transform="rotate(-8)"/><circle r="4.35" fill="none" stroke="url(#gg)" stroke-width="2.9"/><ellipse cx="0.3" cy="-0.3" rx="2.7" ry="3.3" fill="#fbfbfd"/></g></svg>
<div class="t" style="left:163.70px;top:679px;letter-spacing:0.036px;">Index</div>
<svg class="a" style="left:204.6px;top:677px" width="15" height="16" viewBox="0 0 15 16"><defs><linearGradient id="gg" x1="0.15" y1="0.1" x2="0.85" y2="0.95"><stop offset="0" stop-color="#d0d0d8"/><stop offset="0.45" stop-color="#aaa9bb"/><stop offset="1" stop-color="#7d77a2"/></linearGradient></defs><g transform="translate(7.4 7.9)"><circle r="6.2" fill="none" stroke="url(#gg)" stroke-width="1.9" stroke-dasharray="2.0 1.246" transform="rotate(-8)"/><circle r="4.35" fill="none" stroke="url(#gg)" stroke-width="2.9"/><ellipse cx="0.3" cy="-0.3" rx="2.7" ry="3.3" fill="#fbfbfd"/></g></svg>
<div class="t" style="left:220.40px;top:679px;letter-spacing:-0.120px;">Designation</div>
<svg class="a" style="left:330.6px;top:677px" width="15" height="16" viewBox="0 0 15 16"><defs><linearGradient id="gg" x1="0.15" y1="0.1" x2="0.85" y2="0.95"><stop offset="0" stop-color="#d0d0d8"/><stop offset="0.45" stop-color="#aaa9bb"/><stop offset="1" stop-color="#7d77a2"/></linearGradient></defs><g transform="translate(7.4 7.9)"><circle r="6.2" fill="none" stroke="url(#gg)" stroke-width="1.9" stroke-dasharray="2.0 1.246" transform="rotate(-8)"/><circle r="4.35" fill="none" stroke="url(#gg)" stroke-width="2.9"/><ellipse cx="0.3" cy="-0.3" rx="2.7" ry="3.3" fill="#fbfbfd"/></g></svg>
<div class="t" style="left:346.50px;top:679px;letter-spacing:-0.087px;">Standard designation</div>
<svg class="a" style="left:479.8px;top:677px" width="15" height="16" viewBox="0 0 15 16"><defs><linearGradient id="gg" x1="0.15" y1="0.1" x2="0.85" y2="0.95"><stop offset="0" stop-color="#d0d0d8"/><stop offset="0.45" stop-color="#aaa9bb"/><stop offset="1" stop-color="#7d77a2"/></linearGradient></defs><g transform="translate(7.4 7.9)"><circle r="6.2" fill="none" stroke="url(#gg)" stroke-width="1.9" stroke-dasharray="2.0 1.246" transform="rotate(-8)"/><circle r="4.35" fill="none" stroke="url(#gg)" stroke-width="2.9"/><ellipse cx="0.3" cy="-0.3" rx="2.7" ry="3.3" fill="#fbfbfd"/></g></svg>
<div class="t" style="left:496.00px;top:679px;letter-spacing:-0.598px;">Release status</div>
<svg class="a" style="left:582.8px;top:679.8px" width="13" height="11" viewBox="0 0 13 11"><path d="M4.6 1.2 V9.2 L0.9 5.2Z" fill="#969696" stroke="#050505" stroke-width="0.9" stroke-linejoin="miter"/><path d="M7.9 1.2 V9.2 L11.6 5.2Z" fill="#969696" stroke="#050505" stroke-width="0.9" stroke-linejoin="miter"/></svg>
<div class="t" style="left:597.40px;top:679px;letter-spacing:0.056px;">Link designation with icon.</div>
<svg class="a" style="left:754px;top:677.3px" width="12" height="15" viewBox="0 0 12 15"><defs><linearGradient id="dg1" x1="0" y1="0" x2="1" y2="1"><stop offset="0" stop-color="#f4f8ff"/><stop offset="1" stop-color="#a6c6f2"/></linearGradient></defs><path d="M0.5 0.5 H8.5 L11.5 3.5 V14.5 H0.5Z" fill="url(#dg1)" stroke="#8cb0e6" stroke-width="1"/><path d="M8.5 0.5 V3.5 H11.5" fill="#dfeafc" stroke="#6f9ee4" stroke-width="0.8"/></svg>
<div class="t" style="left:768.60px;top:679px;letter-spacing:0.102px;">Document number</div>
<div class="t" style="left:25.70px;top:700px;letter-spacing:-0.779px;">SN-026225</div>
<div class="t" style="left:326.70px;top:700px;letter-spacing:-0.578px;">Assembly IPE 240</div>
<div class="t" style="left:474.00px;top:700px;letter-spacing:-0.266px;">In Progress</div>
<svg class="a" style="left:578.8px;top:700.9px" width="13" height="11" viewBox="0 0 13 11"><path d="M4.6 1.2 V9.2 L0.9 5.2Z" fill="#969696" stroke="#050505" stroke-width="0.9" stroke-linejoin="miter"/><path d="M7.9 1.2 V9.2 L11.6 5.2Z" fill="#969696" stroke="#050505" stroke-width="0.9" stroke-linejoin="miter"/></svg>
<div class="t" style="left:593.50px;top:700px;letter-spacing:-0.050px;">Drawing up to date</div>
<svg class="a" style="left:750px;top:698.2px" width="13" height="16" viewBox="0 0 13 16"><path d="M.5 .5 H9 L12.5 4 V15.5 H.5Z" fill="#fff" stroke="#8e8e8e" stroke-width="1"/><path d="M9 .5 V4 H12.5" fill="#f4f4f4" stroke="#a8a8a8" stroke-width=".8"/><rect x="2.2" y="4" width="7.6" height="7.2" fill="#e0202c"/><path d="M2.4 9.4 C5 9.2,7.6 8,9.6 5.6 L9.6 8 C8 9.4,6 10,2.4 10.6Z" fill="#f8d8d8"/><path d="M3 5 C5 5.2,7 6.2,8.4 8 L5.4 7.4Z" fill="#4a1420"/><rect x="2.2" y="4" width="7.6" height="1.6" fill="#c01828"/></svg>
<div class="t" style="left:764.70px;top:700px;letter-spacing:-0.706px;">DN-000258</div>
<div class="t" style="left:25.70px;top:719px;letter-spacing:-0.779px;">SN-026226</div>
<div class="t" style="left:326.70px;top:719px;letter-spacing:-0.578px;">Assembly IPE 240</div>
<div class="t" style="left:474.00px;top:719px;letter-spacing:-0.266px;">In Progress</div>
<svg class="a" style="left:578.8px;top:719.9px" width="13" height="11" viewBox="0 0 13 11"><path d="M4.6 1.2 V9.2 L0.9 5.2Z" fill="#969696" stroke="#050505" stroke-width="0.9" stroke-linejoin="miter"/><path d="M7.9 1.2 V9.2 L11.6 5.2Z" fill="#969696" stroke="#050505" stroke-width="0.9" stroke-linejoin="miter"/></svg>
<div class="t" style="left:593.50px;top:719px;letter-spacing:-0.050px;">Drawing up to date</div>
<svg class="a" style="left:750px;top:717.2px" width="13" height="16" viewBox="0 0 13 16"><path d="M.5 .5 H9 L12.5 4 V15.5 H.5Z" fill="#fff" stroke="#8e8e8e" stroke-width="1"/><path d="M9 .5 V4 H12.5" fill="#f4f4f4" stroke="#a8a8a8" stroke-width=".8"/><rect x="2.2" y="4" width="7.6" height="7.2" fill="#e0202c"/><path d="M2.4 9.4 C5 9.2,7.6 8,9.6 5.6 L9.6 8 C8 9.4,6 10,2.4 10.6Z" fill="#f8d8d8"/><path d="M3 5 C5 5.2,7 6.2,8.4 8 L5.4 7.4Z" fill="#4a1420"/><rect x="2.2" y="4" width="7.6" height="1.6" fill="#c01828"/></svg>
<div class="t" style="left:764.70px;top:719px;letter-spacing:-0.706px;">DN-000259</div>
<div class="t" style="left:25.70px;top:738px;letter-spacing:-0.779px;">SN-026227</div>
<div class="t" style="left:325.70px;top:738px;letter-spacing:-1.137px;">IPE 240</div>
<div class="t" style="left:474.00px;top:738px;letter-spacing:-0.266px;">In Progress</div>
<svg class="a" style="left:578.8px;top:738.9px" width="13" height="11" viewBox="0 0 13 11"><path d="M4.6 1.2 V9.2 L0.9 5.2Z" fill="#969696" stroke="#050505" stroke-width="0.9" stroke-linejoin="miter"/><path d="M7.9 1.2 V9.2 L11.6 5.2Z" fill="#969696" stroke="#050505" stroke-width="0.9" stroke-linejoin="miter"/></svg>
<div class="t" style="left:593.50px;top:738px;letter-spacing:-0.050px;">Drawing up to date</div>
<svg class="a" style="left:750px;top:736.2px" width="13" height="16" viewBox="0 0 13 16"><path d="M.5 .5 H9 L12.5 4 V15.5 H.5Z" fill="#fff" stroke="#8e8e8e" stroke-width="1"/><path d="M9 .5 V4 H12.5" fill="#f4f4f4" stroke="#a8a8a8" stroke-width=".8"/><rect x="2.2" y="4" width="7.6" height="7.2" fill="#e0202c"/><path d="M2.4 9.4 C5 9.2,7.6 8,9.6 5.6 L9.6 8 C8 9.4,6 10,2.4 10.6Z" fill="#f8d8d8"/><path d="M3 5 C5 5.2,7 6.2,8.4 8 L5.4 7.4Z" fill="#4a1420"/><rect x="2.2" y="4" width="7.6" height="1.6" fill="#c01828"/></svg>
<div class="t" style="left:764.70px;top:738px;letter-spacing:-0.706px;">DN-000260</div>
<div class="t" style="left:25.70px;top:757px;letter-spacing:-0.779px;">SN-026228</div>
<div class="t" style="left:325.70px;top:757px;letter-spacing:-1.137px;">IPE 240</div>
<div class="t" style="left:474.00px;top:757px;letter-spacing:-0.266px;">In Progress</div>
<svg class="a" style="left:578.8px;top:757.9px" width="13" height="11" viewBox="0 0 13 11"><path d="M4.6 1.2 V9.2 L0.9 5.2Z" fill="#969696" stroke="#050505" stroke-width="0.9" stroke-linejoin="miter"/><path d="M7.9 1.2 V9.2 L11.6 5.2Z" fill="#969696" stroke="#050505" stroke-width="0.9" stroke-linejoin="miter"/></svg>
<div class="t" style="left:593.50px;top:757px;letter-spacing:-0.050px;">Drawing up to date</div>
<svg class="a" style="left:750px;top:755.2px" width="13" height="16" viewBox="0 0 13 16"><path d="M.5 .5 H9 L12.5 4 V15.5 H.5Z" fill="#fff" stroke="#8e8e8e" stroke-width="1"/><path d="M9 .5 V4 H12.5" fill="#f4f4f4" stroke="#a8a8a8" stroke-width=".8"/><rect x="2.2" y="4" width="7.6" height="7.2" fill="#e0202c"/><path d="M2.4 9.4 C5 9.2,7.6 8,9.6 5.6 L9.6 8 C8 9.4,6 10,2.4 10.6Z" fill="#f8d8d8"/><path d="M3 5 C5 5.2,7 6.2,8.4 8 L5.4 7.4Z" fill="#4a1420"/><rect x="2.2" y="4" width="7.6" height="1.6" fill="#c01828"/></svg>
<div class="t" style="left:764.70px;top:757px;letter-spacing:-0.706px;">DN-000261</div>
<div class="t" style="left:25.70px;top:776px;letter-spacing:-0.779px;">SN-026229</div>
<div class="t" style="left:325.70px;top:776px;letter-spacing:-1.137px;">IPE 240</div>
<div class="t" style="left:474.00px;top:776px;letter-spacing:-0.266px;">In Progress</div>
<svg class="a" style="left:578.8px;top:776.9px" width="13" height="11" viewBox="0 0 13 11"><path d="M4.6 1.2 V9.2 L0.9 5.2Z" fill="#969696" stroke="#050505" stroke-width="0.9" stroke-linejoin="miter"/><path d="M7.9 1.2 V9.2 L11.6 5.2Z" fill="#969696" stroke="#050505" stroke-width="0.9" stroke-linejoin="miter"/></svg>
<div class="t" style="left:593.50px;top:776px;letter-spacing:-0.050px;">Drawing up to date</div>
<svg class="a" style="left:750px;top:774.2px" width="13" height="16" viewBox="0 0 13 16"><path d="M.5 .5 H9 L12.5 4 V15.5 H.5Z" fill="#fff" stroke="#8e8e8e" stroke-width="1"/><path d="M9 .5 V4 H12.5" fill="#f4f4f4" stroke="#a8a8a8" stroke-width=".8"/><rect x="2.2" y="4" width="7.6" height="7.2" fill="#e0202c"/><path d="M2.4 9.4 C5 9.2,7.6 8,9.6 5.6 L9.6 8 C8 9.4,6 10,2.4 10.6Z" fill="#f8d8d8"/><path d="M3 5 C5 5.2,7 6.2,8.4 8 L5.4 7.4Z" fill="#4a1420"/><rect x="2.2" y="4" width="7.6" height="1.6" fill="#c01828"/></svg>
<div class="t" style="left:764.70px;top:776px;letter-spacing:-0.706px;">DN-000262</div>
<div class="t" style="left:25.70px;top:795px;letter-spacing:-0.779px;">SN-026230</div>
<div class="t" style="left:326.70px;top:795px;letter-spacing:-0.594px;">L EN 10056-1-200x100x12</div>
<div class="t" style="left:474.00px;top:795px;letter-spacing:-0.266px;">In Progress</div>
<svg class="a" style="left:578.8px;top:795.9px" width="13" height="11" viewBox="0 0 13 11"><path d="M4.6 1.2 V9.2 L0.9 5.2Z" fill="#969696" stroke="#050505" stroke-width="0.9" stroke-linejoin="miter"/><path d="M7.9 1.2 V9.2 L11.6 5.2Z" fill="#969696" stroke="#050505" stroke-width="0.9" stroke-linejoin="miter"/></svg>
<div class="t" style="left:593.50px;top:795px;letter-spacing:-0.050px;">Drawing up to date</div>
<svg class="a" style="left:750px;top:793.2px" width="13" height="16" viewBox="0 0 13 16"><path d="M.5 .5 H9 L12.5 4 V15.5 H.5Z" fill="#fff" stroke="#8e8e8e" stroke-width="1"/><path d="M9 .5 V4 H12.5" fill="#f4f4f4" stroke="#a8a8a8" stroke-width=".8"/><rect x="2.2" y="4" width="7.6" height="7.2" fill="#e0202c"/><path d="M2.4 9.4 C5 9.2,7.6 8,9.6 5.6 L9.6 8 C8 9.4,6 10,2.4 10.6Z" fill="#f8d8d8"/><path d="M3 5 C5 5.2,7 6.2,8.4 8 L5.4 7.4Z" fill="#4a1420"/><rect x="2.2" y="4" width="7.6" height="1.6" fill="#c01828"/></svg>
<div class="t" style="left:764.70px;top:795px;letter-spacing:-0.706px;">DN-000263</div>
<div class="t" style="left:25.70px;top:814px;letter-spacing:-0.779px;">SN-026231</div>
<div class="t" style="left:326.70px;top:814px;letter-spacing:-1.094px;">Bl 10</div>
<div class="t" style="left:474.00px;top:814px;letter-spacing:-0.266px;">In Progress</div>
<svg class="a" style="left:578.8px;top:814.9px" width="13" height="11" viewBox="0 0 13 11"><path d="M4.6 1.2 V9.2 L0.9 5.2Z" fill="#969696" stroke="#050505" stroke-width="0.9" stroke-linejoin="miter"/><path d="M7.9 1.2 V9.2 L11.6 5.2Z" fill="#969696" stroke="#050505" stroke-width="0.9" stroke-linejoin="miter"/></svg>
<div class="t" style="left:593.50px;top:814px;letter-spacing:-0.050px;">Drawing up to date</div>
<svg class="a" style="left:750px;top:812.2px" width="13" height="16" viewBox="0 0 13 16"><path d="M.5 .5 H9 L12.5 4 V15.5 H.5Z" fill="#fff" stroke="#8e8e8e" stroke-width="1"/><path d="M9 .5 V4 H12.5" fill="#f4f4f4" stroke="#a8a8a8" stroke-width=".8"/><rect x="2.2" y="4" width="7.6" height="7.2" fill="#e0202c"/><path d="M2.4 9.4 C5 9.2,7.6 8,9.6 5.6 L9.6 8 C8 9.4,6 10,2.4 10.6Z" fill="#f8d8d8"/><path d="M3 5 C5 5.2,7 6.2,8.4 8 L5.4 7.4Z" fill="#4a1420"/><rect x="2.2" y="4" width="7.6" height="1.6" fill="#c01828"/></svg>
<div class="t" style="left:764.70px;top:814px;letter-spacing:-0.706px;">DN-000264</div>
<div class="t" style="left:25.70px;top:833px;letter-spacing:-0.779px;">SN-026232</div>
<div class="t" style="left:326.70px;top:833px;letter-spacing:-1.094px;">Bl 10</div>
<div class="t" style="left:474.00px;top:833px;letter-spacing:-0.266px;">In Progress</div>
<svg class="a" style="left:578.8px;top:833.9px" width="13" height="11" viewBox="0 0 13 11"><path d="M4.6 1.2 V9.2 L0.9 5.2Z" fill="#969696" stroke="#050505" stroke-width="0.9" stroke-linejoin="miter"/><path d="M7.9 1.2 V9.2 L11.6 5.2Z" fill="#969696" stroke="#050505" stroke-width="0.9" stroke-linejoin="miter"/></svg>
<div class="t" style="left:593.50px;top:833px;letter-spacing:-0.050px;">Drawing up to date</div>
<svg class="a" style="left:750px;top:831.2px" width="13" height="16" viewBox="0 0 13 16"><path d="M.5 .5 H9 L12.5 4 V15.5 H.5Z" fill="#fff" stroke="#8e8e8e" stroke-width="1"/><path d="M9 .5 V4 H12.5" fill="#f4f4f4" stroke="#a8a8a8" stroke-width=".8"/><rect x="2.2" y="4" width="7.6" height="7.2" fill="#e0202c"/><path d="M2.4 9.4 C5 9.2,7.6 8,9.6 5.6 L9.6 8 C8 9.4,6 10,2.4 10.6Z" fill="#f8d8d8"/><path d="M3 5 C5 5.2,7 6.2,8.4 8 L5.4 7.4Z" fill="#4a1420"/><rect x="2.2" y="4" width="7.6" height="1.6" fill="#c01828"/></svg>
<div class="t" style="left:764.70px;top:833px;letter-spacing:-0.706px;">DN-000265</div>
<div class="a" style="left:25px;top:905px;width:846px;height:15px;background:#f5f5f5"></div>
<div class="a" style="left:40px;top:910px;width:400px;height:6px;border-radius:3px;background:#a8a8a8"></div>
<div class="a" style="left:30px;top:908px;width:0;height:0;border-top:5px solid transparent;border-bottom:5px solid transparent;border-right:4px solid #b4b4b4"></div>
<div class="a" style="left:862px;top:908px;width:0;height:0;border-top:5px solid transparent;border-bottom:5px solid transparent;border-left:4px solid #c4c4c4"></div>
<div class="a" style="left:24px;top:672px;width:848px;height:1px;background:repeating-linear-gradient(90deg,#525252 0,#525252 2px,transparent 2px,transparent 3px)"></div><div class="a" style="left:24px;top:920px;width:848px;height:1px;background:repeating-linear-gradient(90deg,#525252 0,#525252 2px,transparent 2px,transparent 3px)"></div><div class="a" style="left:24px;top:672px;width:1px;height:249px;background:repeating-linear-gradient(180deg,#525252 0,#525252 2px,transparent 2px,transparent 3px)"></div><div class="a" style="left:871px;top:672px;width:1px;height:249px;background:repeating-linear-gradient(180deg,#525252 0,#525252 2px,transparent 2px,transparent 3px)"></div>
<div class="t" style="left:28.25px;top:926px;letter-spacing:-0.107px;">Number of records: 8</div>
<div class="btn" style="left:16px;top:961px;width:22px;height:22px;border-color:#1c2438;background:linear-gradient(#ffffff 40%,#d6fcfc 100%)"><div class="a" style="left:2px;top:4px;width:16px;height:14px;background:linear-gradient(135deg,#bcd0f6,#8db0f4 50%,#4f86f0);border:1px solid #0c2c8c"></div><div class="a" style="left:6px;top:8px;width:9px;height:7px;background:#fff;border:1px solid #b4bccc;border-top:1px solid #108070"></div></div>
<div class="btn" style="left:410px;top:961px;width:190px;height:22px;border-color:#555"></div>
<div class="a" style="left:587px;top:970px;width:0;height:0;border-left:4px solid transparent;border-right:4px solid transparent;border-top:4px solid #1a1a52"></div>
<div class="btn" style="left:604px;top:961px;width:28px;height:22px"></div>
<svg class="a" style="left:605px;top:962px" width="26" height="20" viewBox="605 962 26 20"><rect x="616.2" y="973" width="6.8" height="6.6" rx=".6" fill="#3c84e2" stroke="#2a68c4" stroke-width=".5"/><rect x="617.6" y="973.2" width="4" height="2.6" fill="#f4f8ff"/><rect x="617.8" y="977.4" width="3.6" height="2" fill="#cfe4d8"/><circle cx="611.9" cy="969" r="4.9" fill="url(#lg)" stroke="#8c9cb6" stroke-width="1.2"/><path d="M623.3 970.3 H628.9 L626.1 973.3Z" fill="#0a0a0a"/></svg>
<div class="btn" style="left:640px;top:961px;width:22px;height:22px"></div>
<svg class="a" style="left:641px;top:962px" width="20" height="20" viewBox="641 962 20 20"><defs><linearGradient id="rf" x1="0" y1="0" x2="0" y2="1"><stop offset="0" stop-color="#44a4ec"/><stop offset="1" stop-color="#2478d4"/></linearGradient></defs><path d="M650.2 968.3 A5 5 0 1 0 655.2 972.6" fill="none" stroke="url(#rf)" stroke-width="2.4"/><path d="M649.8 964.6 L654.8 968.1 L649.8 971.6Z" fill="#3c9ae8"/></svg>
<div class="btn" style="left:670px;top:961px;width:22px;height:22px"></div>
<svg class="a" style="left:671px;top:962px" width="20" height="20" viewBox="671 962 20 20"><g transform="translate(680.2 971.7)" opacity=".75"><circle r="5.6" fill="none" stroke="url(#gg)" stroke-width="1.9" stroke-dasharray="1.8 1.13" transform="rotate(-8)"/><circle r="3.9" fill="none" stroke="url(#gg)" stroke-width="2.6"/><ellipse cx="0.3" cy="-0.3" rx="2.5" ry="3" fill="#f4f4f8"/></g><path d="M684.1 969.1 A1.8 2.0 0 1 1 687.7 969.1 L687.5 970.2 L686.5 970.9 V973.9 H685.3 V970.9 L684.3 970.2Z" fill="#5cba6a"/><ellipse cx="685.6" cy="968.8" rx="0.7" ry="1.1" fill="#b4e4b8"/><path d="M682 974.1 H689.0 L688.4 979.3 H682.6Z" fill="#143fa2"/><path d="M682.8 974.3 H688.2 L687.2 976.1 H683.8Z" fill="#f4e27a"/><path d="M684.2 974.5 H686.8 L686.4 975.5 H684.6Z" fill="#fffbe6"/></svg>
<div class="btn" style="left:696px;top:961px;width:22px;height:22px"></div>
<svg class="a" style="left:697px;top:962px" width="20" height="20" viewBox="697 962 20 20"><path d="M701.3 964.4 H708.4 L711.2 967.2 V978.6 H701.3Z" fill="url(#dg0)" stroke="#7ea4e0" stroke-width=".8"/><path d="M708.4 964.4 V967.2 H711.2" fill="#e4eefc" stroke="#6f9ee4" stroke-width=".7"/><path d="M709.9 969.1 A1.8 2.0 0 1 1 713.5 969.1 L713.3 970.2 L712.3 970.9 V973.9 H711.1 V970.9 L710.1 970.2Z" fill="#5cba6a"/><ellipse cx="711.4" cy="968.8" rx="0.7" ry="1.1" fill="#b4e4b8"/><path d="M707.8 974.1 H714.8 L714.2 979.3 H708.4Z" fill="#143fa2"/><path d="M708.6 974.3 H714.0 L713.0 976.1 H709.6Z" fill="#f4e27a"/><path d="M710.0 974.5 H712.6 L712.2 975.5 H710.4Z" fill="#fffbe6"/></svg>
<div class="btn" style="left:734px;top:961px;width:65px;height:22px"><svg class="a" style="left:2px;top:1px" width="18" height="18" viewBox="0 0 18 18"><defs><radialGradient id="lg" cx=".4" cy=".35" r=".7"><stop offset="0" stop-color="#f4fdff"/><stop offset="1" stop-color="#b4e4f8"/></radialGradient></defs><path d="M9.6 10 L15 15.6" stroke="#8a6a48" stroke-width="3" stroke-linecap="round"/><path d="M9.8 10.2 L14.9 15.5" stroke="#f0a040" stroke-width="1.8" stroke-linecap="round"/><circle cx="6" cy="6" r="5" fill="url(#lg)" stroke="#86a4c6" stroke-width="1.3"/></svg><div class="t" style="left:22px;top:3px;letter-spacing:-0.34px">Find</div><div class="a" style="left:53px;top:8px;width:0;height:0;border-left:4px solid transparent;border-right:4px solid transparent;border-top:4px solid #111"></div></div>
<div class="btn" style="left:807px;top:961px;width:75px;height:22px"><div class="t" style="left:20px;top:4px;letter-spacing:-0.39px;color:#1a1a50">Cancel</div></div>
</body></html>
